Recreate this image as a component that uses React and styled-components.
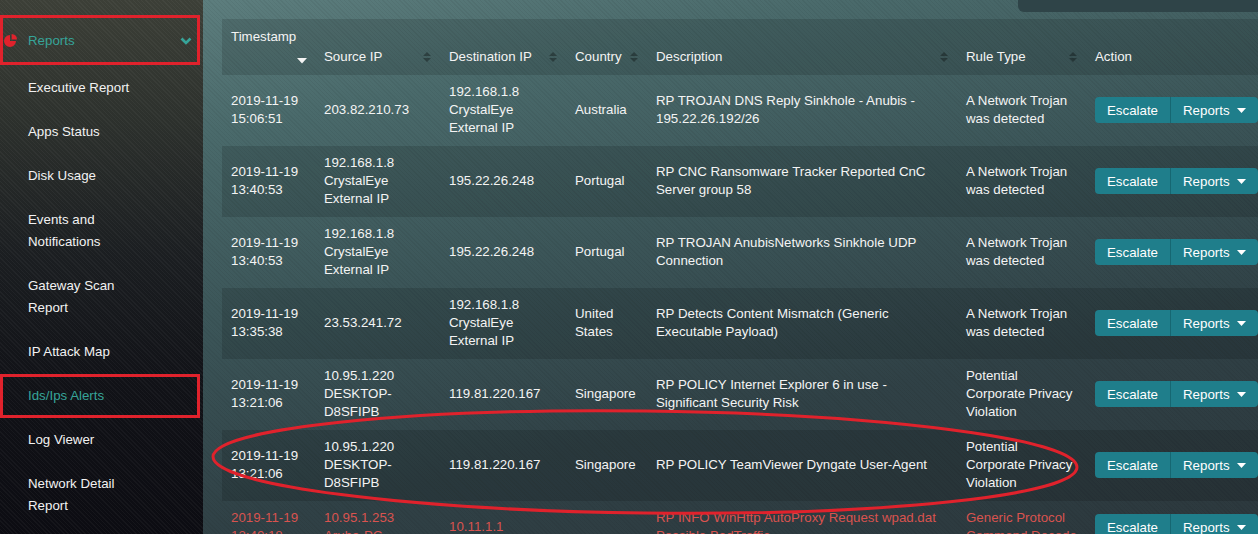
import React from 'react';
import styled, { createGlobalStyle } from 'styled-components';

const GlobalStyle = createGlobalStyle`
  html, body { margin: 0; padding: 0; background: #1a2226; }
  body { font-family: "Liberation Sans", Arial, sans-serif; font-size: 13.3px; }
`;

const Page = styled.div`
  display: flex;
  width: 1258px;
  height: 534px;
  overflow: hidden;
`;

const Sidebar = styled.nav`
  width: 203px;
  flex: none;
  box-sizing: border-box;
  padding-top: 15px;
  background:
    repeating-linear-gradient(45deg, rgba(255,255,255,0.035) 0 1px, transparent 1px 3px),
    linear-gradient(180deg, #3c3f37 0%, #2d312d 22%, #1b1e21 48%, #111217 72%, #0c0c12 100%);
`;

const NavHeader = styled.div`
  display: flex;
  align-items: center;
  width: 200px;
  height: 50px;
  box-sizing: border-box;
  padding: 1px 8px 0 4px;
  margin-bottom: 1px;
  color: #36a499;
  line-height: 22px;
  outline: 3px solid #e0222c;
  outline-offset: -3px;
`;

const NavIcon = styled.svg`
  width: 14px;
  height: 14px;
  flex: none;
  margin-right: 10px;
  margin-top: -2px;
`;

const NavHeaderLabel = styled.span`
  flex: 1;
`;

const NavItem = styled.div`
  width: 200px;
  box-sizing: border-box;
  padding: 11px 0 11px 28px;
  line-height: 22px;
  color: ${p => (p.$active ? '#36a499' : '#f2f2f2')};
  outline: ${p => (p.$marked ? '3px solid #e0222c' : 'none')};
  outline-offset: -3px;
`;

const NavLabel = styled.span`
  display: block;
  width: 118px;
`;

const Main = styled.main`
  flex: 1;
  position: relative;
  overflow: hidden;
  padding-left: 19px;
  background:
    repeating-linear-gradient(45deg, rgba(0,0,0,0.05) 0 1px, transparent 1px 3px),
    linear-gradient(168deg, #5d7e7e 0%, #4a6a6b 18%, #3c5659 42%, #304146 70%, #2c383d 100%);
`;

const TopBar = styled.div`
  display: flex;
  justify-content: flex-end;
  height: 12px;
  margin-bottom: 7px;
`;

const SearchPanel = styled.div`
  width: 240px;
  height: 12px;
  background: #2f4448;
  border-bottom-left-radius: 6px;
`;

const DataTable = styled.table`
  width: 1036px;
  table-layout: fixed;
  border-collapse: collapse;
  border-spacing: 0;
  color: #f4f4f4;
`;

const HeadRow = styled.tr`
  background: rgba(0, 0, 0, 0.13);
`;

const HeadCell = styled.th`
  height: 56px;
  box-sizing: border-box;
  padding: 8px 9px;
  vertical-align: bottom;
  text-align: left;
  font-weight: normal;
  line-height: 20px;
`;

const HeadInner = styled.div`
  display: flex;
  flex-wrap: wrap;
  align-items: center;
  justify-content: space-between;
  column-gap: 4px;
`;

const SortBox = styled.span`
  display: flex;
  align-items: center;
  height: 20px;
  margin-left: auto;
  margin-right: ${p => (p.$desc ? '-1px' : '0')};
  padding-top: ${p => (p.$desc ? '7px' : '0')};
  box-sizing: border-box;
`;

const Row = styled.tr`
  background: ${p => (p.$striped ? 'rgba(0,0,0,0.13)' : 'transparent')};
  color: ${p => (p.$alert ? '#d9534f' : '#f4f4f4')};
`;

const Cell = styled.td`
  padding: 8px 9px 9px;
  vertical-align: middle;
  line-height: 18px;
`;

const BtnGroup = styled.div`
  display: inline-flex;
  height: 26px;
`;

const Button = styled.button`
  display: inline-flex;
  align-items: center;
  gap: 7px;
  height: 26px;
  padding: 0 ${p => (p.$menu ? '12px' : '12px')} 0 ${p => (p.$menu ? '12px' : '12px')};
  border: none;
  border-left: ${p => (p.$menu ? '1px solid #166772' : 'none')};
  border-radius: ${p => (p.$menu ? '0 4px 4px 0' : '4px 0 0 4px')};
  background: #1f7e8b;
  color: #fff;
  font-family: "Liberation Sans", Arial, sans-serif;
  font-size: 13.3px;
  cursor: pointer;
`;

const Caret = styled.svg`
  width: 9px;
  height: 5px;
`;

const Annotation = styled.svg`
  position: absolute;
  left: 0;
  top: 0;
  width: 100%;
  height: 100%;
  pointer-events: none;
`;

const navItems = [
  { label: 'Executive Report' },
  { label: 'Apps Status' },
  { label: 'Disk Usage' },
  { label: 'Events and Notifications' },
  { label: 'Gateway Scan Report' },
  { label: 'IP Attack Map' },
  { label: 'Ids/Ips Alerts', active: true, marked: true },
  { label: 'Log Viewer' },
  { label: 'Network Detail Report' },
];

const columns = [
  { label: 'Timestamp', width: 93, sort: 'desc' },
  { label: 'Source IP', width: 125, sort: 'both' },
  { label: 'Destination IP', width: 126, sort: 'both' },
  { label: 'Country', width: 81, sort: 'both' },
  { label: 'Description', width: 310, sort: 'both' },
  { label: 'Rule Type', width: 129, sort: 'both' },
  { label: 'Action', width: 172, sort: null },
];

const trojan = 'A Network Trojan was detected';
const privacy = 'Potential Corporate Privacy Violation';
const crystal = '192.168.1.8 CrystalEye External IP';

const rows = [
  ['2019-11-19 15:06:51', '203.82.210.73', crystal, 'Australia', 'RP TROJAN DNS Reply Sinkhole - Anubis - 195.22.26.192/26', trojan],
  ['2019-11-19 13:40:53', crystal, '195.22.26.248', 'Portugal', 'RP CNC Ransomware Tracker Reported CnC Server group 58', trojan],
  ['2019-11-19 13:40:53', crystal, '195.22.26.248', 'Portugal', 'RP TROJAN AnubisNetworks Sinkhole UDP Connection', trojan],
  ['2019-11-19 13:35:38', '23.53.241.72', crystal, 'United States', 'RP Detects Content Mismatch (Generic Executable Payload)', trojan],
  ['2019-11-19 13:21:06', '10.95.1.220 DESKTOP-D8SFIPB', '119.81.220.167', 'Singapore', 'RP POLICY Internet Explorer 6 in use - Significant Security Risk', privacy],
  ['2019-11-19 13:21:06', '10.95.1.220 DESKTOP-D8SFIPB', '119.81.220.167', 'Singapore', 'RP POLICY TeamViewer Dyngate User-Agent', privacy],
  ['2019-11-19 13:40:18', '10.95.1.253 Aruba-PC', '10.11.1.1', '', 'RP INFO WinHttp AutoProxy Request wpad.dat Possible BadTraffic', 'Generic Protocol Command Decode', true],
];

function PieIcon() {
  return (
    <NavIcon viewBox="0 0 14 14">
      <path d="M6 8 L6 2 A6 6 0 1 0 12 8 Z" fill="#e0222c" />
      <path d="M7.6 6.4 L7.6 1 A5.4 5.4 0 0 1 13 6.4 Z" fill="#e0222c" />
    </NavIcon>
  );
}

function Chevron() {
  return (
    <svg width="12" height="8" viewBox="0 0 12 8">
      <path d="M1.5 1.5 L6 6 L10.5 1.5" stroke="#36a499" strokeWidth="2.6" fill="none" />
    </svg>
  );
}

function SortBoth() {
  return (
    <SortBox>
      <svg width="8" height="12" viewBox="0 0 8 12">
        <path d="M0 5 L4 1 L8 5 Z" fill="rgba(0,0,0,0.32)" />
        <path d="M0 7 L4 11 L8 7 Z" fill="rgba(0,0,0,0.32)" />
      </svg>
    </SortBox>
  );
}

function SortDesc() {
  return (
    <SortBox $desc>
      <svg width="10" height="6" viewBox="0 0 10 6">
        <path d="M0 0 L10 0 L5 5.5 Z" fill="#f4f4f4" />
      </svg>
    </SortBox>
  );
}

function Actions() {
  return (
    <BtnGroup>
      <Button>Escalate</Button>
      <Button $menu>
        Reports
        <Caret viewBox="0 0 9 5">
          <path d="M0 0 L9 0 L4.5 5 Z" fill="#fff" />
        </Caret>
      </Button>
    </BtnGroup>
  );
}

export default function App() {
  return (
    <>
      <GlobalStyle />
      <Page>
        <Sidebar>
          <NavHeader>
            <PieIcon />
            <NavHeaderLabel>Reports</NavHeaderLabel>
            <Chevron />
          </NavHeader>
          {navItems.map(item => (
            <NavItem key={item.label} $active={item.active} $marked={item.marked}>
              <NavLabel>{item.label}</NavLabel>
            </NavItem>
          ))}
        </Sidebar>
        <Main>
          <TopBar>
            <SearchPanel />
          </TopBar>
          <DataTable>
            <colgroup>
              {columns.map(c => (
                <col key={c.label} style={{ width: c.width }} />
              ))}
            </colgroup>
            <thead>
              <HeadRow>
                {columns.map(c => (
                  <HeadCell key={c.label}>
                    <HeadInner>
                      <span>{c.label}</span>
                      {c.sort === 'both' && <SortBoth />}
                      {c.sort === 'desc' && <SortDesc />}
                    </HeadInner>
                  </HeadCell>
                ))}
              </HeadRow>
            </thead>
            <tbody>
              {rows.map((r, i) => (
                <Row key={i} $striped={i % 2 === 1} $alert={r[6]}>
                  {r.slice(0, 6).map((v, j) => (
                    <Cell key={j}>{v}</Cell>
                  ))}
                  <Cell>
                    <Actions />
                  </Cell>
                </Row>
              ))}
            </tbody>
          </DataTable>
          <Annotation>
            <ellipse
              cx="442"
              cy="462"
              rx="432"
              ry="51"
              transform="rotate(0.7 442 462)"
              fill="none"
              stroke="#e0222c"
              strokeWidth="3"
            />
          </Annotation>
        </Main>
      </Page>
    </>
  );
}
